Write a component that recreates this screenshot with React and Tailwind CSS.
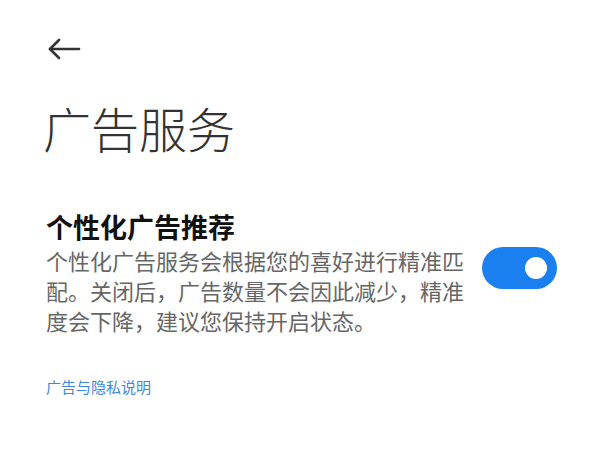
import React, { useState } from 'react';

const BackArrow = () => (
  <svg width="34" height="24" viewBox="0 0 34 24" fill="none" stroke="#333333" strokeWidth="2.6" strokeLinecap="round" strokeLinejoin="round">
    <path d="M32 12H3" />
    <path d="M12 3L3 12L12 21" />
  </svg>
);

const App = () => {
  const [on, setOn] = useState(true);
  return (
    <div
      className="w-[600px] h-[466px] bg-white overflow-hidden"
      style={{ fontFamily: '"Noto Sans CJK SC", "Noto Sans", sans-serif' }}
    >
      <div className="pl-[47px] pt-[37px]">
        <BackArrow />
      </div>

      <h1 className="pl-[43px] mt-[42px] text-[48px] leading-[1] font-light text-[#333333]">广告服务</h1>

      <div className="flex items-center justify-between pl-[46px] pr-[43px] mt-[60px]">
        <div className="w-[425px]">
          <div className="text-[27px] leading-[32px] font-bold text-[#111111]">个性化广告推荐</div>
          <p className="mt-[2px] text-[22px] leading-[30px] text-[#666666]">
            个性化广告服务会根据您的喜好进行精准匹配。关闭后，广告数量不会因此减少，精准度会下降，建议您保持开启状态。
          </p>
        </div>
        <button
          onClick={() => setOn(!on)}
          className={`relative w-[75px] h-[42px] rounded-full shrink-0 -mt-[10px] ${on ? 'bg-[#1a80f0]' : 'bg-[#d0d0d0]'}`}
        >
          <span
            className={`absolute top-[10px] w-[22px] h-[22px] rounded-full bg-white ${on ? 'left-[43px]' : 'left-[10px]'}`}
          />
        </button>
      </div>

      <div className="pl-[46px] mt-[42px] text-[15px] leading-[20px] text-[#3c8ad8]">广告与隐私说明</div>
    </div>
  );
};

export default App;
